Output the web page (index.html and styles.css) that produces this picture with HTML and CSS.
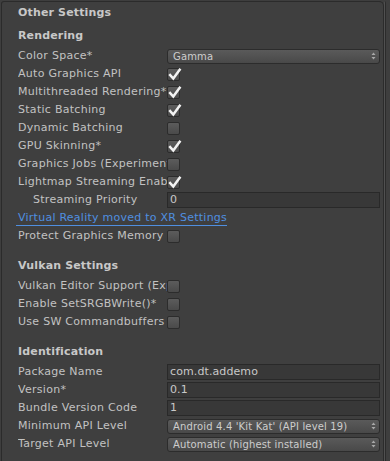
FILE: index.html
```html
<!DOCTYPE html>
<html>
<head>
<meta charset="utf-8">
<link rel="stylesheet" href="styles.css">
</head>
<body>
<div class="inspector">
  <div class="panel">
    <div class="title">Other Settings</div>

    <div class="section-title">Rendering</div>
    <div class="row"><span class="label">Color Space*</span><div class="popup"><span>Gamma</span><svg class="arrows" width="5" height="8" viewBox="0 0 5 8"><path d="M2.5 0.5 L4.5 3 L0.5 3 Z M0.5 5 L4.5 5 L2.5 7.5 Z" fill="#a8a8a8"/></svg></div></div>
    <div class="row"><span class="label">Auto Graphics API</span><span class="check"><svg class="tick" width="15" height="15" viewBox="0 0 15 15"><path d="M2.3 7.2 L6.3 11.6 L13.4 1.8" fill="none" stroke="#f2f2f2" stroke-width="2.5"/></svg></span></div>
    <div class="row"><span class="label">Multithreaded Rendering*</span><span class="check"><svg class="tick" width="15" height="15" viewBox="0 0 15 15"><path d="M2.3 7.2 L6.3 11.6 L13.4 1.8" fill="none" stroke="#f2f2f2" stroke-width="2.5"/></svg></span></div>
    <div class="row"><span class="label">Static Batching</span><span class="check"><svg class="tick" width="15" height="15" viewBox="0 0 15 15"><path d="M2.3 7.2 L6.3 11.6 L13.4 1.8" fill="none" stroke="#f2f2f2" stroke-width="2.5"/></svg></span></div>
    <div class="row"><span class="label">Dynamic Batching</span><span class="check"></span></div>
    <div class="row"><span class="label">GPU Skinning*</span><span class="check"><svg class="tick" width="15" height="15" viewBox="0 0 15 15"><path d="M2.3 7.2 L6.3 11.6 L13.4 1.8" fill="none" stroke="#f2f2f2" stroke-width="2.5"/></svg></span></div>
    <div class="row"><span class="label">Graphics Jobs (Experimental)*</span><span class="check"></span></div>
    <div class="row"><span class="label">Lightmap Streaming Enabled</span><span class="check"><svg class="tick" width="15" height="15" viewBox="0 0 15 15"><path d="M2.3 7.2 L6.3 11.6 L13.4 1.8" fill="none" stroke="#f2f2f2" stroke-width="2.5"/></svg></span></div>
    <div class="row"><span class="label indent">Streaming Priority</span><div class="field">0</div></div>
    <div class="row"><span class="link">Virtual Reality moved to XR Settings</span></div>
    <div class="row"><span class="label">Protect Graphics Memory</span><span class="check"></span></div>

    <div class="section-title spaced">Vulkan Settings</div>
    <div class="row"><span class="label">Vulkan Editor Support (Experimental)</span><span class="check"></span></div>
    <div class="row"><span class="label">Enable SetSRGBWrite()*</span><span class="check"></span></div>
    <div class="row"><span class="label">Use SW Commandbuffers</span><span class="check"></span></div>

    <div class="section-title spaced">Identification</div>
    <div class="row"><span class="label">Package Name</span><div class="field">com.dt.addemo</div></div>
    <div class="row"><span class="label">Version*</span><div class="field">0.1</div></div>
    <div class="row"><span class="label">Bundle Version Code</span><div class="field">1</div></div>
    <div class="row"><span class="label">Minimum API Level</span><div class="popup"><span>Android 4.4 'Kit Kat' (API level 19)</span><svg class="arrows" width="5" height="8" viewBox="0 0 5 8"><path d="M2.5 0.5 L4.5 3 L0.5 3 Z M0.5 5 L4.5 5 L2.5 7.5 Z" fill="#a8a8a8"/></svg></div></div>
    <div class="row"><span class="label">Target API Level</span><div class="popup"><span>Automatic (highest installed)</span><svg class="arrows" width="5" height="8" viewBox="0 0 5 8"><path d="M2.5 0.5 L4.5 3 L0.5 3 Z M0.5 5 L4.5 5 L2.5 7.5 Z" fill="#a8a8a8"/></svg></div></div>
  </div>
  <div class="scroll-edge"></div>
</div>
</body>
</html>
```
FILE: styles.css
```css
html, body {
  margin: 0;
  padding: 0;
}
body {
  background: #3e3e3e;
  font-family: "DejaVu Sans", Verdana, sans-serif;
  font-size: 11px;
  color: #c2c2c2;
  height: 461px;
  overflow: hidden;
}
.inspector {
  display: flex;
  height: 461px;
  box-sizing: border-box;
  padding: 1px 0 0 1px;
}
.panel {
  width: 383px;
  flex: none;
  box-sizing: border-box;
  border: 1px solid #2b2b2b;
  border-bottom: none;
  border-radius: 3px 5px 0 0;
  background: #3f3f3f;
  padding: 2px 3px 0 16px;
}
.scroll-edge {
  width: 1px;
  flex: none;
  background: #505050;
  border-right: 1px solid #2b2b2b;
  border-radius: 0 3px 0 0;
}
.title, .section-title {
  height: 18px;
  line-height: 18px;
  font-weight: bold;
  color: #c8c8c8;
  letter-spacing: 0.15px;
}
.section-title {
  margin-top: 5px;
  margin-bottom: 2px;
}
.section-title.spaced {
  margin-top: 12px;
}
.row {
  height: 18px;
  display: flex;
  align-items: center;
}
.label {
  width: 149px;
  flex: none;
  box-sizing: border-box;
  white-space: nowrap;
  overflow: hidden;
  line-height: 18px;
  letter-spacing: 0.28px;
}
.label.indent {
  padding-left: 15px;
}
.check {
  width: 13px;
  height: 13px;
  flex: none;
  box-sizing: border-box;
  border: 1px solid #2c2c2c;
  border-radius: 2px;
  background: linear-gradient(#5c5c5c, #4a4a4a);
  position: relative;
  margin-top: 1px;
}
.tick {
  position: absolute;
  left: -1px;
  top: -2px;
  overflow: visible;
}
.popup {
  flex: 1;
  height: 15px;
  box-sizing: border-box;
  border: 1px solid #2c2c2c;
  border-radius: 3px;
  background: linear-gradient(#5a5a5a, #494949);
  display: flex;
  align-items: center;
  justify-content: space-between;
  padding: 0 3px 0 5px;
  font-size: 10px;
  color: #cdcdcd;
  white-space: nowrap;
  letter-spacing: 0.15px;
}
.arrows {
  flex: none;
}
.field {
  flex: 1;
  height: 16px;
  box-sizing: border-box;
  border: 1px solid #292929;
  background: #383838;
  padding-left: 2px;
  line-height: 14px;
  color: #c8c8c8;
  white-space: nowrap;
  letter-spacing: 0.1px;
}
.link {
  color: #4f8fe0;
  border-bottom: 1px solid #4f8fe0;
  margin-left: -2px;
  padding-left: 2px;
  line-height: 14px;
  white-space: nowrap;
  letter-spacing: 0.25px;
}
```
